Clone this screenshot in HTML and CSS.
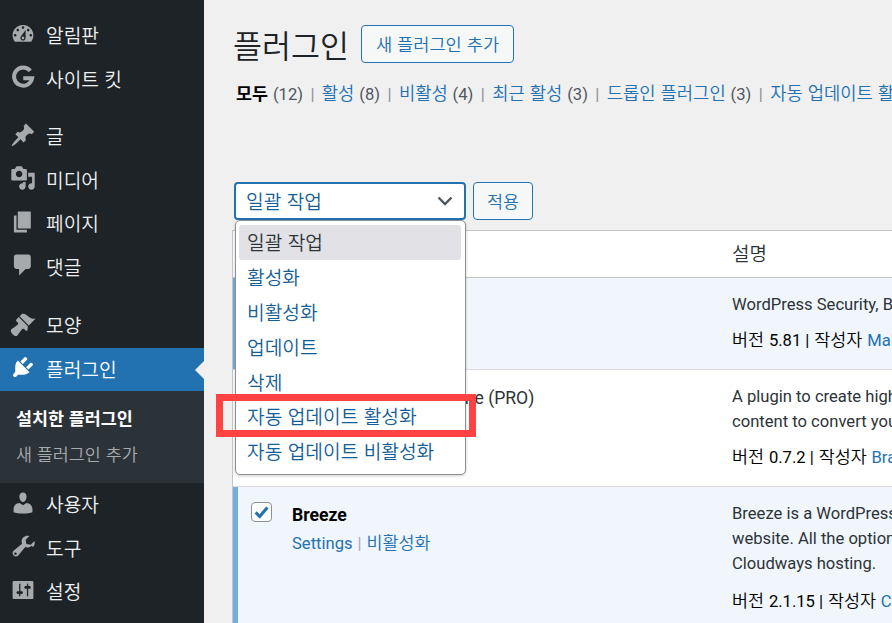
FILE: index.html
```html
<!DOCTYPE html>
<html lang="ko">
<head>
<meta charset="utf-8">
<title>플러그인</title>
<link rel="stylesheet" href="styles.css">
</head>
<body>
<div class="shell">
  <nav class="sidebar">
    <ul class="menu">
      <li class="item"><svg class="ico" viewBox="0 0 20 20"><path fill-rule="evenodd" d="M3.76 16h12.48c1.1-1.37 1.76-3.11 1.76-5 0-4.42-3.58-8-8-8s-8 3.58-8 8c0 1.89.66 3.63 1.76 5zM10 4c.55 0 1 .45 1 1s-.45 1-1 1-1-.45-1-1 .45-1 1-1zM6 6c.55 0 1 .45 1 1s-.45 1-1 1-1-.45-1-1 .45-1 1-1zm8 0c.55 0 1 .45 1 1s-.45 1-1 1-1-.45-1-1 .45-1 1-1zm-5.37 5.55L12 7v6c0 1.1-.9 2-2 2s-2-.9-2-2c0-.57.24-1.08.63-1.45zM4 10c.55 0 1 .45 1 1s-.45 1-1 1-1-.45-1-1 .45-1 1-1zm12 0c.55 0 1 .45 1 1s-.45 1-1 1-1-.45-1-1 .45-1 1-1zm-5 3c0-.55-.45-1-1-1s-1 .45-1 1 .45 1 1 1 1-.45 1-1z"/></svg><span>알림판</span></li>
      <li class="item"><svg class="ico" viewBox="0 0 20 20"><path class="g" d="M15.600 5.300A7 7 0 1 0 17 11H10.200"/></svg><span>사이트 킷</span></li>
      <li class="item sep"><svg class="ico" viewBox="0 0 20 20"><path d="M10.440 3.020l1.820-1.820 6.360 6.350-1.830 1.820c-1.050-.680-2.480-.570-3.410.360l-.750.750c-.920.930-1.040 2.350-.350 3.410l-1.830 1.820-2.410-2.410-2.800 2.790c-.420.420-3.380 2.710-3.800 2.290s1.860-3.390 2.280-3.810l2.790-2.790L4.100 9.36l1.830-1.820c1.050.690 2.480.570 3.400-.360l.750-.750c.930-.920 1.050-2.350.360-3.410z"/></svg><span>글</span></li>
      <li class="item"><svg class="ico" viewBox="0 0 20 20"><path fill-rule="evenodd" d="M13 11V4c0-.55-.45-1-1-1h-1.670L9 1H5L3.670 3H2c-.55 0-1 .45-1 1v7c0 .55.45 1 1 1h10c.55 0 1-.45 1-1zM7 4.500c1.380 0 2.500 1.120 2.500 2.500S8.380 9.500 7 9.500 4.500 8.380 4.500 7 5.620 4.500 7 4.500zM14 6h5v10.500c0 1.380-1.120 2.500-2.500 2.500S14 17.880 14 16.500s1.120-2.500 2.500-2.500c.17 0 .34.020.5.050V9h-3V6zm-4 8.050V13h2v3.500c0 1.380-1.120 2.500-2.500 2.500S7 17.880 7 16.500 8.120 14 9.500 14c.17 0 .34.020.5.050z"/></svg><span>미디어</span></li>
      <li class="item"><svg class="ico" viewBox="0 0 20 20"><path d="M6 15V2h10v13H6zm-1 1h8v2H3V5h2v11z"/></svg><span>페이지</span></li>
      <li class="item"><svg class="ico" viewBox="0 0 20 20"><path d="M5 2h9c1.100 0 2 .900 2 2v7c0 1.100-.900 2-2 2h-2l-5 5v-5H5c-1.100 0-2-.900-2-2V4c0-1.100.900-2 2-2z"/></svg><span>댓글</span></li>
      <li class="item sep2"><svg class="ico" viewBox="0 0 20 20"><path d="M14.480 11.060L7.410 3.990l1.500-1.500c.5-.56 2.300-.47 3.510.32 1.210.8 1.430 1.280 2.910 2.100 1.180.64 2.450 1.260 4.450.85zm-.71.71L6.700 4.700 4.930 6.470c-.39.39-.39 1.020 0 1.410l1.060 1.060c.39.39.39 1.030 0 1.420-.6.6-1.170 1.060-1.950 1.640-.78.59-2.580 1.760-3.040 2.220-1.100 1.100.24 2.870 1 3.630.76.76 2.530 2.100 3.630 1 .46-.46 1.630-2.260 2.220-3.040.58-.78 1.040-1.350 1.640-1.950.39-.39 1.030-.39 1.420 0l1.060 1.060c.39.39 1.020.39 1.410 0z"/></svg><span>모양</span></li>
      <li class="item active"><svg class="ico" viewBox="0 0 20 20"><path d="M13.110 4.360L9.870 7.600 8 5.730l3.240-3.240c.35-.34 1.050-.2 1.560.32.52.51.66 1.210.31 1.550zm-8 1.770l.91-1.120 9.010 9.010-1.190.84c-.71.71-2.630 1.160-3.820 1.160H6.140L4.900 17.260c-.59.59-1.54.59-2.120 0-.59-.58-.59-1.530 0-2.120l1.240-1.240v-3.880c0-1.130.4-3.190 1.090-3.890zm7.260 3.970l3.240-3.240c.34-.35 1.040-.21 1.550.31.52.51.66 1.210.31 1.550l-3.240 3.250z"/></svg><span>플러그인</span></li>
      <li class="sub">
        <a class="sub-link current">설치한 플러그인</a>
        <a class="sub-link">새 플러그인 추가</a>
      </li>
      <li class="item"><svg class="ico" viewBox="0 0 20 20"><path d="M10 9.250c-2.270 0-2.730-3.440-2.730-3.440C7 4.020 7.820 2 9.970 2c2.160 0 2.980 2.020 2.710 3.810 0 0-.41 3.440-2.680 3.440zm0 2.570L12.720 10c2.390 0 4.520 2.330 4.520 4.530v2.490s-3.650 1.130-7.240 1.130c-3.650 0-7.240-1.130-7.240-1.130v-2.490c0-2.250 1.940-4.530 4.520-4.530z"/></svg><span>사용자</span></li>
      <li class="item"><svg class="ico" viewBox="0 0 20 20"><path fill-rule="evenodd" d="M16.680 9.770c-1.340 1.340-3.300 1.670-4.950.99l-5.410 6.520c-.99.99-2.590.99-3.580 0s-.99-2.59 0-3.570l6.520-5.420c-.68-1.650-.35-3.610.99-4.950 1.280-1.280 3.120-1.620 4.710-1.060l-2.910 2.910.5 3.340 3.340.5 2.910-2.910c.56 1.590.22 3.430-1.120 4.650zM4.180 16.820c.53 0 .95-.42.95-.95s-.42-.95-.95-.95-.95.42-.95.95.42.95.95.95z"/></svg><span>도구</span></li>
      <li class="item"><svg class="ico" viewBox="0 0 20 20"><path fill-rule="evenodd" d="M18 16V4c0-.55-.45-1-1-1H3c-.55 0-1 .45-1 1v12c0 .55.45 1 1 1h14c.55 0 1-.45 1-1zM8 11h1c.55 0 1 .45 1 1s-.45 1-1 1H8v1.500c0 .28-.22.5-.5.5s-.5-.22-.5-.5V13H6c-.55 0-1-.45-1-1s.45-1 1-1h1V5.500c0-.28.22-.5.5-.5s.5.22.5.5V11zm5-2h-1c-.55 0-1-.45-1-1s.45-1 1-1h1V5.500c0-.28.22-.5.5-.5s.5.22.5.5V7h1c.55 0 1 .45 1 1s-.45 1-1 1h-1v5.500c0 .28-.22.5-.5.5s-.5-.22-.5-.5V9z"/></svg><span>설정</span></li>
    </ul>
  </nav>
  <main class="content">
    <div class="head">
      <h1 class="title">플러그인</h1>
      <a class="add-btn">새 플러그인 추가</a>
    </div>
    <div class="filters">
      <b class="f-current">모두</b> <span class="count en">(12)</span><i class="bar en">|</i><a>활성</a> <span class="count en">(8)</span><i class="bar en">|</i><a>비활성</a> <span class="count en">(4)</span><i class="bar en">|</i><a>최근 활성</a> <span class="count en">(3)</span><i class="bar en">|</i><a>드롭인 플러그인</a> <span class="count en">(3)</span><i class="bar en">|</i><a>자동 업데이트 활성화</a> <span class="count en">(0)</span>
    </div>
    <div class="tablenav">
      <div class="select">
        <span>일괄 작업</span>
        <svg class="chev" viewBox="0 0 16 10"><path d="M1.500 1.500L8 8l6.500-6.500"/></svg>
      </div>
      <a class="apply">적용</a>
      <ul class="dropdown">
        <li class="opt hover">일괄 작업</li>
        <li class="opt">활성화</li>
        <li class="opt">비활성화</li>
        <li class="opt">업데이트</li>
        <li class="opt">삭제</li>
        <li class="opt">자동 업데이트 활성화</li>
        <li class="opt">자동 업데이트 비활성화</li>
      </ul>
      <div class="mark"></div>
    </div>
    <table class="plugins">
      <colgroup><col class="c-check"><col class="c-name"><col class="c-desc"></colgroup>
      <thead>
        <tr><th></th><th></th><th class="th-desc">설명</th></tr>
      </thead>
      <tbody>
        <tr class="on r1">
          <td class="check"></td>
          <td class="name"></td>
          <td class="desc"><p class="en">WordPress Security, Backup, Firewall, Malware Scan</p><p class="ver">버전 <span class="en">5.81 |</span> 작성자 <a class="en">MalCare Security</a></p></td>
        </tr>
        <tr class="off r2">
          <td class="check"></td>
          <td class="name"><span class="plain en">Brainstorm Force Engine (PRO)</span></td>
          <td class="desc"><p class="en">A plugin to create highly engaging<br>content to convert your visitors</p><p class="ver">버전 <span class="en">0.7.2 |</span> 작성자 <a class="en">Brainstorm Force</a></p></td>
        </tr>
        <tr class="on r3">
          <td class="check"><span class="box"><svg viewBox="0 0 20 20"><path d="M3.500 10.500L8 15l8.500-10"/></svg></span></td>
          <td class="name"><strong class="en">Breeze</strong><div class="acts"><a class="en">Settings</a> <i class="bar2 en">|</i> <a>비활성화</a></div></td>
          <td class="desc"><p class="en">Breeze is a WordPress cache plugin<br>website. All the options<br>Cloudways hosting.</p><p class="ver">버전 <span class="en">2.1.15 |</span> 작성자 <a class="en">Cloudways</a></p></td>
        </tr>
      </tbody>
    </table>
  </main>
</div>
</body>
</html>
```
FILE: styles.css
```css
* { box-sizing: border-box; }
html, body { margin: 0; height: 100%; overflow: hidden; }
body {
  font-family: "Noto Sans CJK KR", sans-serif;
  font-size: 17.4px;
  font-weight: 350;
  line-height: 25px;
  color: #2c3338;
  background: #f0f0f1;
}
.en { font-family: Roboto, "Noto Sans", sans-serif; font-size: 16.6px; font-weight: 400; }
a { color: #2271b1; }
i { font-style: normal; }
ul { list-style: none; margin: 0; padding: 0; }
p { margin: 0; }

.shell { display: flex; width: 892px; height: 623px; overflow: hidden; }

.sidebar { flex: 0 0 204px; height: 623px; background: #1d2327; color: #f0f0f1; padding-top: 14px; }
.item { position: relative; display: flex; align-items: center; height: 43.500px; padding-left: 10px; font-size: 19.200px; }
.item.sep { margin-top: 14px; }
.item.sep2 { margin-top: 15px; }
.item span { margin-left: 10px; }
.ico { flex: 0 0 26px; width: 26px; height: 26px; margin-bottom: 4px; fill: #a7aaad; }
.ico .g { fill: none; stroke: #a7aaad; stroke-width: 3; }
.item.active { background: #2271b1; color: #fff; }
.item.active .ico { fill: #fff; }
.item.active::after {
  content: ""; position: absolute; right: 0; top: 13px;
  border: 9px solid transparent; border-right-color: #f0f0f1; border-left-width: 0;
}
.sub { display: flex; flex-direction: column; height: 92px; padding-top: 9px; background: #2c3338; }
.sub-link { height: 36px; padding-left: 16px; line-height: 36px; color: #a7aaad; }
.sub-link.current { color: #fff; font-weight: 700; }

.content { flex: 1; min-width: 0; padding-left: 29px; }
.head { display: flex; align-items: center; height: 38px; margin-top: 25px; }
.title { margin: 0; font-size: 31.500px; font-weight: 350; color: #1d2327; line-height: 38px; }
.add-btn {
  margin-left: 12px; padding: 0 14px; height: 38px; line-height: 36px; font-size: 17.600px;
  border: 1px solid #2271b1; border-radius: 4px; background: #f6f7f7; white-space: nowrap;
}
.filters { margin-top: 17px; height: 25px; margin-left: 3px; white-space: nowrap; }
.filters a { font-size: 17.700px; }
.f-current { color: #000; font-weight: 700; }
.count { color: #50575e; }
.bar { margin: 0 7.400px; color: #8c8f94; }

.tablenav { position: relative; display: flex; gap: 7px; margin: 77px 0 0 1px; height: 38px; font-size: 19.200px; }
.select {
  display: flex; align-items: center; justify-content: space-between;
  width: 232px; height: 38px; padding: 0 11px 0 10px;
  background: #fff; border: 2px solid #2271b1; border-radius: 4px; color: #135e96;
}
.chev { width: 16px; height: 10px; fill: none; stroke: #50575e; stroke-width: 2.400; }
.apply {
  width: 60px; height: 38px; line-height: 36px; text-align: center; font-size: 17.400px;
  border: 1px solid #2271b1; border-radius: 4px; background: #f6f7f7;
}
.dropdown {
  position: absolute; z-index: 2; left: 1px; top: 38px; width: 231px; height: 255px;
  padding: 4px 4px 4px 3px; background: #fff; border: 1px solid #8c8f94; border-radius: 5px;
  box-shadow: 0 1px 3px rgba(0,0,0,.2);
}
.opt { height: 34.900px; line-height: 35px; padding-left: 8px; color: #135e96; white-space: nowrap; }
.opt.hover { background: #e2e1e6; border-radius: 3px; color: #2c3338; }
.mark {
  position: absolute; z-index: 3; left: -18px; top: 212px; width: 260px; height: 43px;
  border: 7px solid #ff4242;
}

.plugins {
  table-layout: fixed; width: 800px; margin: 10px 0 0 -1px; border-collapse: separate; border-spacing: 0;
  background: #fff; border-top: 1px solid #c3c4c7; border-left: 1px solid #c3c4c7;
}
.c-check { width: 59px; }
.c-name { width: 440px; }
.plugins th { height: 47px; padding: 0 0 3px; font-weight: 350; text-align: left; border-bottom: 1px solid #c3c4c7; font-size: 19px; }
.plugins td { padding: 0; vertical-align: top; border-bottom: 1px solid #dcdcde; }
.on td { background: #f0f6fc; }
.on .check { box-shadow: inset 5px 0 0 #72aee6; }
.check { padding-left: 18px !important; padding-top: 15px !important; }
.r1 td { height: 92px; }
.r2 td { height: 117px; }
.r3 td { height: 160px; }
.r3 .ver { margin-top: 11px; }
.name { padding-top: 14px !important; white-space: nowrap; }
.name strong { color: #000; font-weight: 700; font-size: 17.600px; }
.plain { color: #2c3338; font-size: 17.600px; }
.acts { margin-top: 1px; }
.bar2 { color: #a7aaad; }
.desc { padding-top: 14px !important; white-space: nowrap; }
.ver { margin-top: 9px; color: #000; }
.box {
  display: block; width: 21px; height: 20px; background: #fff;
  border: 1px solid #8c8f94; border-radius: 4px;
}
.box svg { display: block; width: 19px; height: 18px; fill: none; stroke: #2271b1; stroke-width: 3.500; }
```
